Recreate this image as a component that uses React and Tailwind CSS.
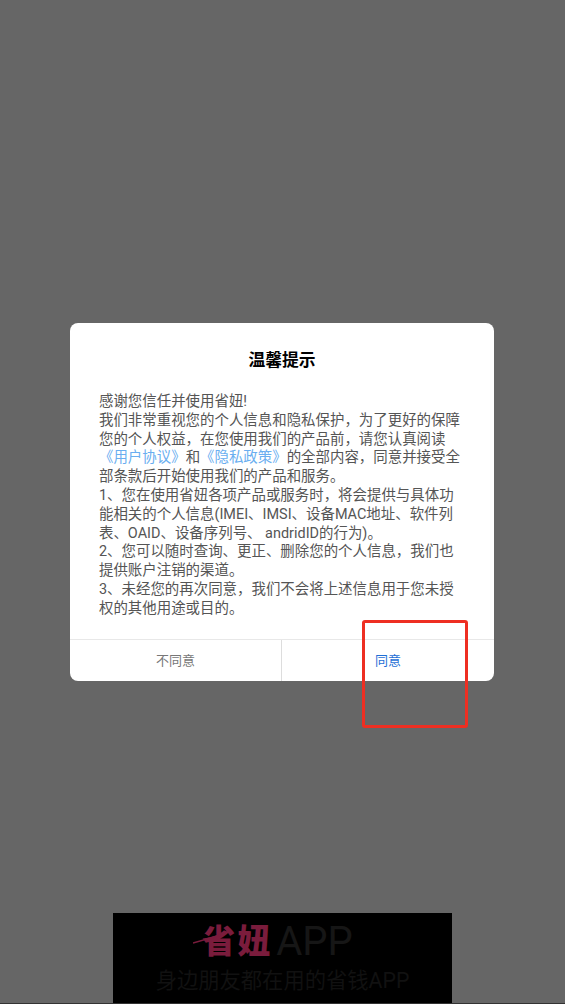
export default function App() {
  const font = { fontFamily: 'Roboto, "Noto Sans CJK SC", sans-serif' };
  return (
    <div style={font} className="relative h-[1004px] w-[565px] overflow-hidden bg-[#666666]">
      <div className="flex flex-col items-start pt-[323px] pl-[70px]">
        <div className="flex h-[358px] w-[424px] flex-col overflow-hidden rounded-[8px] bg-white">
          <h1 className="mt-[25px] h-[24px] text-center text-[16.8px] leading-[24px] font-bold text-black">温馨提示</h1>
          <div className="mt-[21px] pl-[29px] text-[14.45px] leading-[18.8px] whitespace-nowrap text-[#555555]">
            <p>感谢您信任并使用省妞!</p>
            <p>我们非常重视您的个人信息和隐私保护，为了更好的保障</p>
            <p>您的个人权益，在您使用我们的产品前，请您认真阅读</p>
            <p>
              <span className="text-[#6aaef0]">《用户协议》</span>和<span className="text-[#6aaef0]">《隐私政策》</span>的全部内容，同意并接受全
            </p>
            <p>部条款后开始使用我们的产品和服务。</p>
            <p>1、您在使用省妞各项产品或服务时，将会提供与具体功</p>
            <p>能相关的个人信息(IMEI、IMSI、设备MAC地址、软件列</p>
            <p>表、OAID、设备序列号、 andridID的行为)。</p>
            <p>2、您可以随时查询、更正、删除您的个人信息，我们也</p>
            <p>提供账户注销的渠道。</p>
            <p>3、未经您的再次同意，我们不会将上述信息用于您未授</p>
            <p>权的其他用途或目的。</p>
          </div>
          <div className="mt-auto flex h-[42px] border-t border-[#e8e8e8] text-[13px]">
            <button className="flex w-[212px] items-center justify-center border-r border-[#dddddd] text-[#777777]">不同意</button>
            <button className="flex flex-1 items-center justify-center text-[#1f6fd6]">同意</button>
          </div>
        </div>
      </div>

      <div className="absolute top-[620px] left-[362px] h-[108px] w-[106px] rounded-[3px] border-[3px] border-[#ee2f22]" />

      <div className="absolute top-[913px] left-[113px] flex h-[90px] w-[339px] flex-col items-center bg-black">
        <div className="relative mt-[10px] mr-[10px] flex h-[38px] items-center">
          <span className="text-[33px] leading-[38px] font-black tracking-[2px] text-[#7a1c3c]">省妞</span>
          <span className="ml-[4px] text-[40px] leading-[38px] text-[#161616]">APP</span>
          <svg className="absolute top-[11px] -left-[9px]" width="30" height="10" viewBox="0 0 30 10">
            <path d="M0 9 L28 1" stroke="#7a1c3c" strokeWidth="1.5" />
          </svg>
        </div>
        <p className="mt-[8px] text-[21.3px] leading-[24px] whitespace-nowrap text-[#111111]">身边朋友都在用的省钱APP</p>
      </div>
      <div className="absolute top-[1003px] left-0 h-[1px] w-full bg-[#333333]" />
    </div>
  );
}
